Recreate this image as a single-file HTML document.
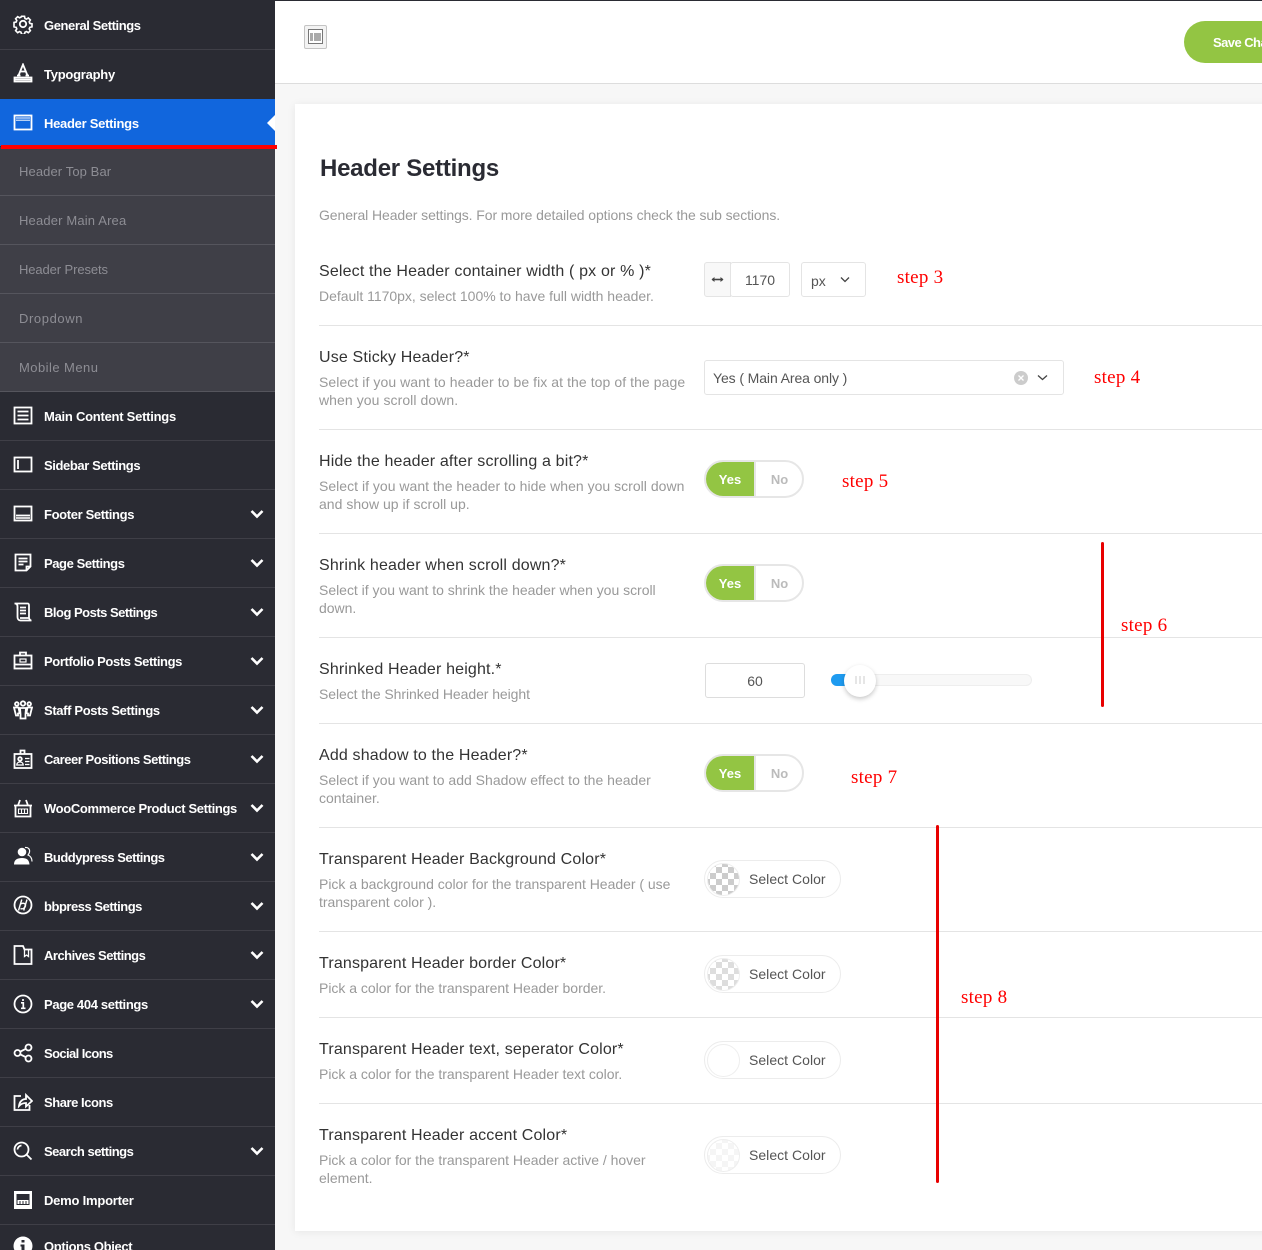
<!DOCTYPE html>
<html><head><meta charset="utf-8">
<style>
html,body{margin:0;padding:0}
html{height:1250px;overflow:hidden}
body{width:1262px;height:1250px;overflow:hidden;position:relative;background:#f7f7f7;font-family:"Liberation Sans",sans-serif}
.a{position:absolute}
.t{position:absolute;white-space:nowrap;line-height:20px}
.s{left:44px;margin-top:1px;color:#fff;font-size:13px;font-weight:700;letter-spacing:-.35px}
.u{left:19px;margin-top:1px;color:#8d8d94;font-size:13px;letter-spacing:.1px}
.l{position:absolute;left:0;width:275px;height:1px;background:#3f3f47}
.ul{position:absolute;left:0;width:275px;height:1px;background:#55555d}
.i{position:absolute;left:13px;width:20px;height:20px;fill:none;stroke:#fff;stroke-width:1.8}
.c{position:absolute;left:250px;width:14px;height:10px;fill:none;stroke:#fff;stroke-width:2.6}
.h{left:319px;margin-top:2px;color:#333;font-size:16px;letter-spacing:.16px}
.d{left:319px;margin-top:0;color:#999;font-size:14px;letter-spacing:-.02px;line-height:18px}
.r{position:absolute;left:319px;right:0;height:1px;background:#e4e4e4}
.st{color:#f00;font-family:"Liberation Serif",serif;font-size:19px;letter-spacing:.25px;margin-top:1px}
.tg{position:absolute;left:704px;width:96px;height:34px;border:2px solid #e6e6e6;border-radius:19px;overflow:hidden;background:#fff}
.tg b{position:absolute;left:0;top:0;width:48px;height:34px;background:#93c543;color:#fff;font-size:13px;text-align:center;line-height:36px;border-right:2px solid #e6e6e6}
.tg i{position:absolute;left:51px;top:0;width:45px;height:34px;color:#bbb;font-size:13px;font-weight:700;font-style:normal;text-align:center;line-height:36px}
.p{position:absolute;left:704px;width:135px;height:36px;border:1px solid #ececec;border-radius:19px;background:#fff}
.p span{position:absolute;left:44px;top:8px;font-size:14px;line-height:20px;color:#555;letter-spacing:.03px;white-space:nowrap}
.p u{position:absolute;left:2px;top:2px;width:31px;height:31px;border-radius:50%;border:1px solid #eee;background:repeating-conic-gradient(#ccc 0 25%,#fff 0 50%) 2px 3px/12px 12px}
.box{position:absolute;background:#fff;border:1px solid #e4e4e4;border-radius:3px;box-sizing:border-box;color:#555;font-size:14px}
</style></head><body>

<div class="a" style="left:275px;top:0;width:987px;height:83px;background:#fff;border-bottom:1px solid #ddd"></div>
<div class="a" style="left:275px;top:0;width:987px;height:1px;background:#2a2b33"></div>
<div class="a" style="left:304px;top:25px;width:21px;height:22px;border:1px solid #c4c4c4;border-radius:2px;background:#f3f3f3"></div>
<svg class="a" style="left:308px;top:29px" width="16" height="16" viewBox="0 0 16 16"><rect x=".5" y=".5" width="14" height="14" fill="#fff" stroke="#777"/><rect x="2" y="4" width="3" height="8" fill="#aaa"/><rect x="6" y="4" width="7" height="8" fill="#aaa"/></svg>
<div class="a" style="left:1184px;top:21px;width:120px;height:42px;border-radius:21px;background:#93c543"></div>
<div class="t" style="left:1213px;top:33px;color:#fff;font-size:13px;font-weight:700;letter-spacing:-.55px">Save Changes</div>

<div class="a" style="left:295px;top:104px;width:990px;height:1127px;background:#fff;box-shadow:0 1px 8px rgba(0,0,0,.07)"></div>

<div class="a" style="left:0;top:0;width:275px;height:1250px;background:#2a2b33"></div>
<div class="a" style="left:0;top:147px;width:275px;height:245px;background:#3f3f47"></div>
<div class="a" style="left:0;top:99px;width:275px;height:47px;background:#1166dd"></div>
<div class="a" style="left:267px;top:115px;width:0;height:0;border:8px solid transparent;border-left:0;border-right:8px solid #fff"></div>
<div class="a" style="left:1px;top:145px;width:276px;height:4px;background:#f00"></div>

<div class="l" style="top:49px"></div><div class="ul" style="top:195px"></div><div class="ul" style="top:244px"></div><div class="ul" style="top:293px"></div><div class="ul" style="top:342px"></div><div class="ul" style="top:391px"></div>
<div class="l" style="top:440px"></div><div class="l" style="top:489px"></div><div class="l" style="top:538px"></div><div class="l" style="top:587px"></div><div class="l" style="top:636px"></div><div class="l" style="top:685px"></div><div class="l" style="top:734px"></div><div class="l" style="top:783px"></div><div class="l" style="top:832px"></div><div class="l" style="top:881px"></div><div class="l" style="top:930px"></div><div class="l" style="top:979px"></div><div class="l" style="top:1028px"></div><div class="l" style="top:1077px"></div><div class="l" style="top:1126px"></div><div class="l" style="top:1175px"></div><div class="l" style="top:1224px"></div>

<div class="t s" style="top:15px;letter-spacing:-.42px">General Settings</div>
<div class="t s" style="top:64px;letter-spacing:-.25px">Typography</div>
<div class="t s" style="top:113px;letter-spacing:-.28px">Header Settings</div>
<div class="t u" style="top:161px">Header Top Bar</div>
<div class="t u" style="top:210px;letter-spacing:.16px">Header Main Area</div>
<div class="t u" style="top:259px;letter-spacing:-.1px">Header Presets</div>
<div class="t u" style="top:308px;letter-spacing:.6px">Dropdown</div>
<div class="t u" style="top:357px;letter-spacing:.45px">Mobile Menu</div>
<div class="t s" style="top:406px;letter-spacing:-.25px">Main Content Settings</div>
<div class="t s" style="top:455px;letter-spacing:-.4px">Sidebar Settings</div>
<div class="t s" style="top:504px;letter-spacing:-.35px">Footer Settings</div>
<div class="t s" style="top:553px;letter-spacing:-.42px">Page Settings</div>
<div class="t s" style="top:602px;letter-spacing:-.5px">Blog Posts Settings</div>
<div class="t s" style="top:651px;letter-spacing:-.39px">Portfolio Posts Settings</div>
<div class="t s" style="top:700px">Staff Posts Settings</div>
<div class="t s" style="top:749px;letter-spacing:-.47px">Career Positions Settings</div>
<div class="t s" style="top:798px">WooCommerce Product Settings</div>
<div class="t s" style="top:847px;letter-spacing:-.5px">Buddypress Settings</div>
<div class="t s" style="top:896px;letter-spacing:-.47px">bbpress Settings</div>
<div class="t s" style="top:945px;letter-spacing:-.5px">Archives Settings</div>
<div class="t s" style="top:994px">Page 404 settings</div>
<div class="t s" style="top:1043px;letter-spacing:-.6px">Social Icons</div>
<div class="t s" style="top:1092px;letter-spacing:-.45px">Share Icons</div>
<div class="t s" style="top:1141px;letter-spacing:-.5px">Search settings</div>
<div class="t s" style="top:1190px;letter-spacing:-.22px">Demo Importer</div>
<div class="t s" style="top:1236px">Options Object</div>

<svg class="i" style="top:14px" viewBox="0 0 20 20"><path d="M8.3 1.5h3.4l.5 2.4 1.7.7 2-1.3 2.3 2.3-1.3 2 .7 1.7 2.4.5v3.4l-2.4.5-.7 1.7 1.300 2-2.300 2.300-2-1.300-1.700.7-.5 2.400H8.300l-.5-2.400-1.700-.7-2 1.300-2.300-2.300 1.300-2-.7-1.700-2.400-.5V8.300l2.400-.5.7-1.700-1.300-2 2.300-2.300 2 1.300 1.700-.7z" transform="translate(1 1) scale(.9)"/><circle cx="10" cy="10" r="3.200"/></svg>
<svg class="i" style="top:63px" viewBox="0 0 20 20"><path d="M5.500 12.500 10 1.500l4.500 11M7.200 8.500h5.600M4 12.500h3.500M12.500 12.500H16"/><rect x="1.500" y="14.500" width="17" height="4"/><path d="M1.500 16.500h17"/></svg>
<svg class="i" style="top:113px" viewBox="0 0 20 20"><rect x="1.500" y="2.500" width="17" height="14"/><path d="M3 5h14" stroke-width="1"/><path d="M3 7.200h14" stroke-width="1"/></svg>
<svg class="i" style="top:406px" viewBox="0 0 20 20"><rect x="1.500" y="1.500" width="17" height="16"/><path d="M4.500 5.500h11M4.500 9.500h11M4.500 13.500h11"/></svg>
<svg class="i" style="top:455px" viewBox="0 0 20 20"><rect x="1.500" y="2.500" width="17" height="14"/><path d="M5 5v9" stroke-width="1.800"/></svg>
<svg class="i" style="top:504px" viewBox="0 0 20 20"><rect x="1.500" y="2.500" width="17" height="14"/><path d="M3 11.500h14"/><path d="M3 14h14" stroke-width="1.600"/></svg>
<svg class="i" style="top:553px" viewBox="0 0 20 20"><path d="M2.500 1.500h15v12l-4 4h-11z"/><path d="M13.500 17.500v-4h4M5.500 5.500h9M5.500 8.500h9M5.500 11.500h5"/></svg>
<svg class="i" style="top:602px" viewBox="0 0 20 20"><path d="M1.500 1.500h13c1.500 0 1.500 1 1.500 2v12.500M1.500 1.500c2.500 0 3 1.500 3 3v10.500c0 2 1 3.500 3 3.500h11c-1 0-2-1-2.500-2.500h-9"/><path d="M7 5.500h6M7 8.500h6M7 11.500h6"/></svg>
<svg class="i" style="top:651px" viewBox="0 0 20 20"><rect x="1.500" y="4.500" width="17" height="13"/><path d="M7 4.500v-3h6v3M1.500 13.500h17"/><rect x="7" y="8" width="6" height="3" stroke-width="1.200"/></svg>
<svg class="i" style="top:700px" viewBox="0 0 20 20"><circle cx="3.800" cy="4" r="1.800"/><circle cx="10" cy="3.500" r="2.200"/><circle cx="16.200" cy="4" r="1.800"/><path d="M1 7.500h4.500l1 5-1.500 1v2H3l-1-4zM19 7.500h-4.500l-1 5 1.500 1v2h2l1-4zM7 8h6l-.5 6v4.500h-5V14z"/></svg>
<svg class="i" style="top:749px" viewBox="0 0 20 20"><rect x="1.500" y="5" width="17" height="14"/><path d="M7.500 5V1.500h4V5"/><circle cx="7" cy="10" r="1.800"/><path d="M3.800 16c0-4 6.400-4 6.400 0zM12 9.500h4.500M12 12.500h4.500M12 15.500h4.500" stroke-width="1.300"/></svg>
<svg class="i" style="top:798px" viewBox="0 0 20 20"><path d="M1 7.500h18M2.500 7.500v11h15v-11M5 7.500 7 2M15 7.500 13 2"/><path d="M5.500 11h9v4.500h-9zM8.500 11v4.500M11.500 11v4.500" stroke-width="1.100"/></svg>
<svg class="i" style="top:846px;fill:#fff;stroke:none" viewBox="0 0 20 20"><circle cx="9" cy="6" r="4.300"/><path d="M1 18.500c0-5 3.500-6.500 8-6.500s7 1.500 7.500 6.500z"/><path d="M12 1.500c3.500-.5 5 2 4.500 4.500-.2 1.500-1.200 2.500-1.500 3 2.500 1 4 3 4 6.500" fill="none" stroke="#fff" stroke-width="1.200"/></svg>
<svg class="i" style="top:895px" viewBox="0 0 20 20"><circle cx="10" cy="10" r="8.500"/><path d="M8.800 4.500 5.500 15.500M14 4.500l-3.300 11M7.700 9c2.500-1.500 5-.5 4.800 1.500-.2 2.500-3 4-5 3" stroke-width="1.400"/></svg>
<svg class="i" style="top:945px" viewBox="0 0 20 20"><path d="M1.500 1v18h17V4.500h-7l-1.500-3.500z"/><path d="M11.500 3.500v8l2-1.500 2 1.500V4.500" stroke-width="1.300"/></svg>
<svg class="i" style="top:994px" viewBox="0 0 20 20"><circle cx="10" cy="10" r="8.500"/><path d="M8 8.800h2.300v5.200M8 14.300h4.500M10 5v2" stroke-width="1.700"/></svg>
<svg class="i" style="top:1043px" viewBox="0 0 20 20"><circle cx="4.500" cy="10" r="3"/><circle cx="15.500" cy="4.500" r="3"/><circle cx="15.500" cy="15.500" r="3"/><path d="M7.200 8.700 12.800 5.800M7.200 11.300l5.600 2.900"/></svg>
<svg class="i" style="top:1092px" viewBox="0 0 20 20"><path d="M8 4H1.500v14h15v-5"/><path d="M6 14c.5-4.500 3.500-7 7-7V3l6 6-6 5.500V11c-3 0-5 .8-7 3z"/></svg>
<svg class="i" style="top:1141px" viewBox="0 0 20 20"><circle cx="8.500" cy="8.500" r="7"/><path d="M13.500 13.500 18.500 18.500M4.500 8.500c0-2 2-4 4-4"/></svg>
<svg class="i" style="top:1190px" viewBox="0 0 20 20"><rect x="1" y="1" width="18" height="18" fill="#fff" stroke="none"/><rect x="3.500" y="4" width="13" height="11" fill="#2a2b33" stroke="none"/><rect x="4.500" y="10" width="11" height="4" fill="#fff" stroke="none"/><path d="M7 11v3M10 11v3M13 11v3" stroke="#2a2b33" stroke-width="1"/></svg>
<svg class="i" style="top:1236px;fill:#fff;stroke:none" viewBox="0 0 20 20"><circle cx="10" cy="10" r="9.500"/><path d="M8.500 4h3v2.500h-3zM7.500 8.500h4v6h1.500v2H7.500v-2h1v-4h-1z" fill="#2a2b33"/></svg>

<svg class="c" style="top:509px" viewBox="0 0 14 10"><path d="M1.500 2 7 7.500 12.500 2"/></svg>
<svg class="c" style="top:558px" viewBox="0 0 14 10"><path d="M1.500 2 7 7.500 12.500 2"/></svg>
<svg class="c" style="top:607px" viewBox="0 0 14 10"><path d="M1.500 2 7 7.500 12.500 2"/></svg>
<svg class="c" style="top:656px" viewBox="0 0 14 10"><path d="M1.500 2 7 7.500 12.500 2"/></svg>
<svg class="c" style="top:705px" viewBox="0 0 14 10"><path d="M1.500 2 7 7.500 12.500 2"/></svg>
<svg class="c" style="top:754px" viewBox="0 0 14 10"><path d="M1.500 2 7 7.500 12.500 2"/></svg>
<svg class="c" style="top:803px" viewBox="0 0 14 10"><path d="M1.500 2 7 7.500 12.500 2"/></svg>
<svg class="c" style="top:852px" viewBox="0 0 14 10"><path d="M1.500 2 7 7.500 12.500 2"/></svg>
<svg class="c" style="top:901px" viewBox="0 0 14 10"><path d="M1.500 2 7 7.500 12.500 2"/></svg>
<svg class="c" style="top:950px" viewBox="0 0 14 10"><path d="M1.500 2 7 7.500 12.500 2"/></svg>
<svg class="c" style="top:999px" viewBox="0 0 14 10"><path d="M1.500 2 7 7.500 12.500 2"/></svg>
<svg class="c" style="top:1146px" viewBox="0 0 14 10"><path d="M1.500 2 7 7.500 12.500 2"/></svg>

<div class="t" style="left:320px;top:154px;font-size:24px;line-height:30px;font-weight:700;color:#2a2b33;letter-spacing:-.25px">Header Settings</div>
<div class="t d" style="top:206px;letter-spacing:-.09px">General Header settings. For more detailed options check the sub sections.</div>

<div class="t h" style="top:260px">Select the Header container width ( px or % )*</div>
<div class="t d" style="top:287px">Default 1170px, select 100% to have full width header.</div>
<div class="r" style="top:325px"></div>
<div class="t h" style="top:346px">Use Sticky Header?*</div>
<div class="t d" style="top:373px;letter-spacing:.07px">Select if you want to header to be fix at the top of the page<br>when you scroll down.</div>
<div class="r" style="top:429px"></div>
<div class="t h" style="top:450px">Hide the header after scrolling a bit?*</div>
<div class="t d" style="top:477px;letter-spacing:.02px">Select if you want the header to hide when you scroll down<br>and show up if scroll up.</div>
<div class="r" style="top:533px"></div>
<div class="t h" style="top:554px">Shrink header when scroll down?*</div>
<div class="t d" style="top:581px">Select if you want to shrink the header when you scroll<br>down.</div>
<div class="r" style="top:637px"></div>
<div class="t h" style="top:658px">Shrinked Header height.*</div>
<div class="t d" style="top:685px;letter-spacing:-.07px">Select the Shrinked Header height</div>
<div class="r" style="top:723px"></div>
<div class="t h" style="top:744px">Add shadow to the Header?*</div>
<div class="t d" style="top:771px;letter-spacing:.01px">Select if you want to add Shadow effect to the header<br>container.</div>
<div class="r" style="top:827px"></div>
<div class="t h" style="top:848px">Transparent Header Background Color*</div>
<div class="t d" style="top:875px">Pick a background color for the transparent Header ( use<br>transparent color ).</div>
<div class="r" style="top:931px"></div>
<div class="t h" style="top:952px">Transparent Header border Color*</div>
<div class="t d" style="top:979px">Pick a color for the transparent Header border.</div>
<div class="r" style="top:1017px"></div>
<div class="t h" style="top:1038px">Transparent Header text, seperator Color*</div>
<div class="t d" style="top:1065px">Pick a color for the transparent Header text color.</div>
<div class="r" style="top:1103px"></div>
<div class="t h" style="top:1124px">Transparent Header accent Color*</div>
<div class="t d" style="top:1151px">Pick a color for the transparent Header active / hover<br>element.</div>

<div class="box" style="left:704px;top:262px;width:27px;height:35px;background:#f8f8f8;border-radius:3px 0 0 3px"></div>
<svg class="a" style="left:711px;top:275px" width="13" height="9" viewBox="0 0 13 9"><path d="M1 4.500h11" fill="none" stroke="#444" stroke-width="1.600"/><path d="M3.500 2 .5 4.500 3.500 7zM9.500 2 12.500 4.500 9.500 7z" fill="#444"/></svg>
<div class="box" style="left:730px;top:262px;width:60px;height:35px;text-align:center;line-height:34px">1170</div>
<div class="box" style="left:801px;top:262px;width:65px;height:35px;line-height:36px;padding-left:9px">px</div>
<svg class="a" style="left:840px;top:276px" width="10" height="7" viewBox="0 0 10 7"><path d="M1 1.500 5 5.500 9 1.500" fill="none" stroke="#444" stroke-width="1.300"/></svg>
<div class="t st" style="left:897px;top:267px">step 3</div>

<div class="box" style="left:704px;top:360px;width:360px;height:35px;line-height:35px;padding-left:8px;letter-spacing:-.1px">Yes ( Main Area only )</div>
<div class="a" style="left:1014px;top:371px;width:14px;height:14px;border-radius:50%;background:#ccc"></div>
<svg class="a" style="left:1017px;top:374px" width="8" height="8" viewBox="0 0 8 8"><path d="M1.500 1.500l5 5M6.500 1.500l-5 5" stroke="#fff" stroke-width="1.300"/></svg>
<svg class="a" style="left:1037px;top:374px" width="11" height="7" viewBox="0 0 11 7"><path d="M1 1.500 5.500 5.500 10 1.500" fill="none" stroke="#444" stroke-width="1.300"/></svg>
<div class="t st" style="left:1094px;top:367px">step 4</div>

<div class="tg" style="top:460px"><b>Yes</b><i>No</i></div>
<div class="t st" style="left:842px;top:471px">step 5</div>
<div class="tg" style="top:564px"><b>Yes</b><i>No</i></div>
<div class="t st" style="left:1121px;top:615px">step 6</div>

<div class="box" style="left:705px;top:663px;width:100px;height:35px;text-align:center;line-height:35px;border-color:#ddd">60</div>
<div class="a" style="left:831px;top:674px;width:199px;height:10px;background:#f8f8f8;border:1px solid #eee;border-radius:6px"></div>
<div class="a" style="left:831px;top:674px;width:20px;height:12px;background:#1e9bf0;border-radius:6px 0 0 6px"></div>
<div class="a" style="left:844px;top:665px;width:32px;height:32px;border-radius:50%;background:#fff;box-shadow:0 2px 5px rgba(0,0,0,.22)"></div>
<svg class="a" style="left:855px;top:676px" width="11" height="8" viewBox="0 0 11 8"><path d="M1 0v8M5 0v8M9 0v8" stroke="#ddd" stroke-width="1.500"/></svg>

<div class="tg" style="top:754px"><b>Yes</b><i>No</i></div>
<div class="t st" style="left:851px;top:767px">step 7</div>

<div class="p" style="top:860px"><u></u><span>Select Color</span></div>
<div class="p" style="top:955px"><u style="background:repeating-conic-gradient(#ddd 0 25%,#fff 0 50%) 2px 3px/12px 12px"></u><span>Select Color</span></div>
<div class="p" style="top:1041px"><u style="background:#fff"></u><span>Select Color</span></div>
<div class="p" style="top:1136px"><u style="background:repeating-conic-gradient(#f5f5f5 0 25%,#fff 0 50%) 2px 3px/12px 12px"></u><span>Select Color</span></div>
<div class="t st" style="left:961px;top:987px">step 8</div>

<div class="a" style="left:1101px;top:542px;width:3px;height:165px;background:#e80000;border-radius:2px"></div>
<div class="a" style="left:936px;top:825px;width:3px;height:358px;background:#e80000;border-radius:2px"></div>
</body></html>
